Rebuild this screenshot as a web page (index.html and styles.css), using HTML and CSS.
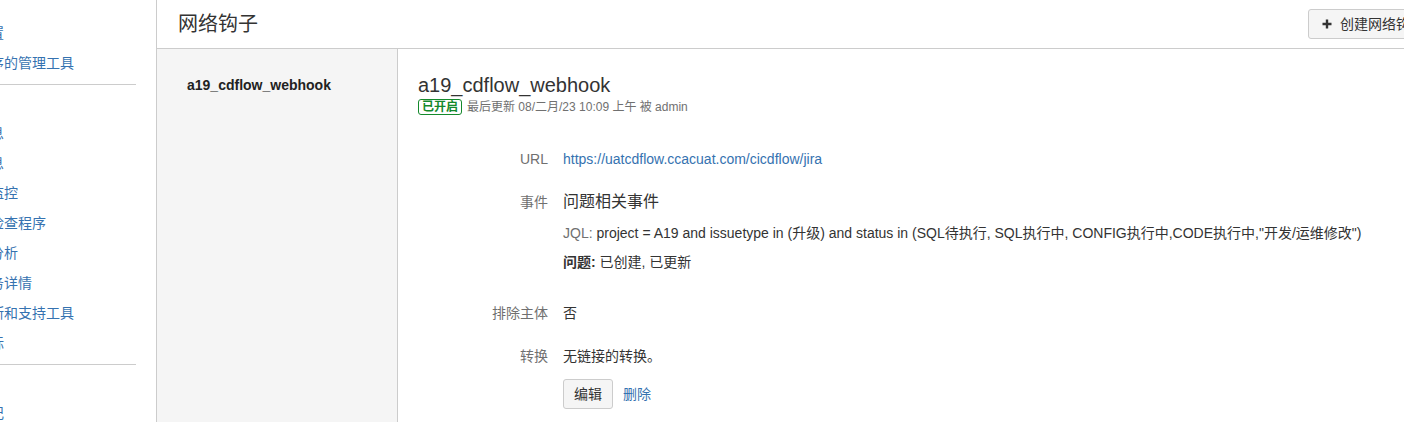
FILE: index.html
```html
<!DOCTYPE html>
<html lang="zh-CN">
<head>
<meta charset="utf-8">
<title>网络钩子</title>
<link rel="stylesheet" href="styles.css">
</head>
<body>
<div class="page">
  <aside class="sidebar">
    <nav class="admin-nav">
      <ul class="nav-list">
        <li><a href="#">常规配置</a></li>
        <li><a href="#">应用程序的管理工具</a></li>
      </ul>
      <div class="nav-sep"></div>
      <ul class="nav-list nav-group">
        <li><a href="#">系统信息</a></li>
        <li><a href="#">集群信息</a></li>
        <li><a href="#">数据库监控</a></li>
        <li><a href="#">完整性检查程序</a></li>
        <li><a href="#">数据库分析</a></li>
        <li><a href="#">计划任务详情</a></li>
        <li><a href="#">故障诊断和支持工具</a></li>
        <li><a href="#">实例指标</a></li>
      </ul>
      <div class="nav-sep"></div>
      <ul class="nav-list nav-group">
        <li><a href="#">审计日记</a></li>
      </ul>
    </nav>
  </aside>
  <main class="main">
    <header class="main-header">
      <h1 class="page-title">网络钩子</h1>
      <button class="btn btn-create" type="button">
        <svg class="plus-icon" width="10" height="10" viewBox="0 0 10 10" aria-hidden="true"><path d="M5 0.5v9M0.5 5h9" stroke="#333" stroke-width="2.4" fill="none"/></svg>
        <span>创建网络钩子</span>
      </button>
    </header>
    <div class="content">
      <div class="hook-list">
        <div class="hook-name">a19_cdflow_webhook</div>
      </div>
      <section class="detail">
        <h2 class="hook-title">a19_cdflow_webhook</h2>
        <div class="meta">
          <span class="lozenge">已开启</span>
          <span class="meta-text">最后更新 08/二月/23 10:09 上午 被 admin</span>
        </div>
        <div class="field field-url">
          <div class="field-label">URL</div>
          <div class="field-value"><a class="link" href="#">https://uatcdflow.ccacuat.com/cicdflow/jira</a></div>
        </div>
        <div class="field field-events">
          <div class="field-label">事件</div>
          <div class="field-value">
            <div class="event-title">问题相关事件</div>
            <p class="event-line"><span class="muted">JQL:</span> project = A19 and issuetype in (升级) and status in (SQL待执行, SQL执行中, CONFIG执行中,CODE执行中,"开发/运维修改")</p>
            <p class="event-line"><strong>问题:</strong> 已创建, 已更新</p>
          </div>
        </div>
        <div class="field field-exclude">
          <div class="field-label">排除主体</div>
          <div class="field-value">否</div>
        </div>
        <div class="field field-transitions">
          <div class="field-label">转换</div>
          <div class="field-value">无链接的转换。</div>
        </div>
        <div class="field field-actions">
          <div class="field-label"></div>
          <div class="field-value actions">
            <button class="btn" type="button">编辑</button>
            <a class="link" href="#">删除</a>
          </div>
        </div>
      </section>
    </div>
  </main>
</div>
</body>
</html>
```

FILE: styles.css
```css
html, body {
  margin: 0;
  padding: 0;
}
body {
  font-family: "Liberation Sans", "Noto Sans CJK SC", sans-serif;
  font-size: 14px;
  color: #333;
  background: #fff;
  overflow: hidden;
}
.page {
  display: flex;
  width: 1444px;
  height: 422px;
}

/* sidebar */
.sidebar {
  width: 156px;
  flex: none;
  border-right: 1px solid #ccc;
  overflow: hidden;
}
.admin-nav {
  margin-left: -52px;
  width: 188px;
  padding-top: 18px;
}
.nav-list {
  list-style: none;
  margin: 0;
  padding: 0;
}
.nav-group {
  margin-top: 33px;
}
.nav-list li {
  line-height: 20px;
  padding: 5px 0;
  white-space: nowrap;
}
.nav-list a {
  color: #3572b0;
  text-decoration: none;
}
.nav-sep {
  height: 1px;
  background: #ccc;
  margin-top: 6px;
}

/* main */
.main {
  flex: 1;
  display: flex;
  flex-direction: column;
}
.main-header {
  height: 48px;
  border-bottom: 1px solid #ccc;
  display: flex;
  align-items: center;
  justify-content: space-between;
  padding: 0 7px 0 21px;
  flex: none;
}
.page-title {
  margin: 0;
  font-size: 20px;
  line-height: 28px;
  font-weight: normal;
  color: #333;
}
.btn {
  font-family: inherit;
  font-size: 14px;
  color: #333;
  background: #f5f5f5;
  border: 1px solid #ccc;
  border-radius: 3px;
  height: 30px;
  padding: 0 10px;
  line-height: 28px;
  cursor: pointer;
}
.btn-create {
  display: flex;
  align-items: center;
  gap: 8px;
  padding: 0 12px 0 13px;
}
.plus-icon {
  display: block;
}

.content {
  flex: 1;
  display: flex;
}
.hook-list {
  width: 241px;
  box-sizing: border-box;
  flex: none;
  background: #f5f5f5;
  border-right: 1px solid #ccc;
  padding: 26px 0 0 30px;
}
.hook-name {
  font-weight: bold;
  font-size: 14px;
  line-height: 20px;
  color: #222;
}

.detail {
  flex: 1;
  padding: 22px 0 0 20px;
}
.hook-title {
  margin: 0;
  font-size: 20px;
  line-height: 28px;
  font-weight: normal;
  color: #333;
}
.meta {
  display: flex;
  align-items: center;
  gap: 5px;
  height: 16px;
  font-size: 12px;
}
.lozenge {
  border: 1px solid #14892c;
  color: #14892c;
  font-weight: bold;
  border-radius: 3px;
  padding: 0 3px;
  line-height: 14px;
  font-size: 12px;
}
.meta-text {
  color: #707070;
  line-height: 16px;
}

.field {
  display: flex;
  align-items: baseline;
  gap: 15px;
  line-height: 20px;
}
.field-label {
  width: 130px;
  flex: none;
  text-align: right;
  color: #707070;
}
.field-value {
  color: #333;
}
.field-url { margin-top: 34px; }
.field-events { margin-top: 21px; }
.field-exclude { margin-top: 31px; }
.field-transitions { margin-top: 23px; }
.field-actions { margin-top: 13px; }

.event-title {
  font-size: 16px;
  line-height: 24px;
}
.event-line {
  margin: 9px 0 0;
  line-height: 20px;
}
.muted {
  color: #707070;
}
.link {
  color: #3572b0;
  text-decoration: none;
}
.actions {
  display: flex;
  align-items: center;
  gap: 10px;
}
```
